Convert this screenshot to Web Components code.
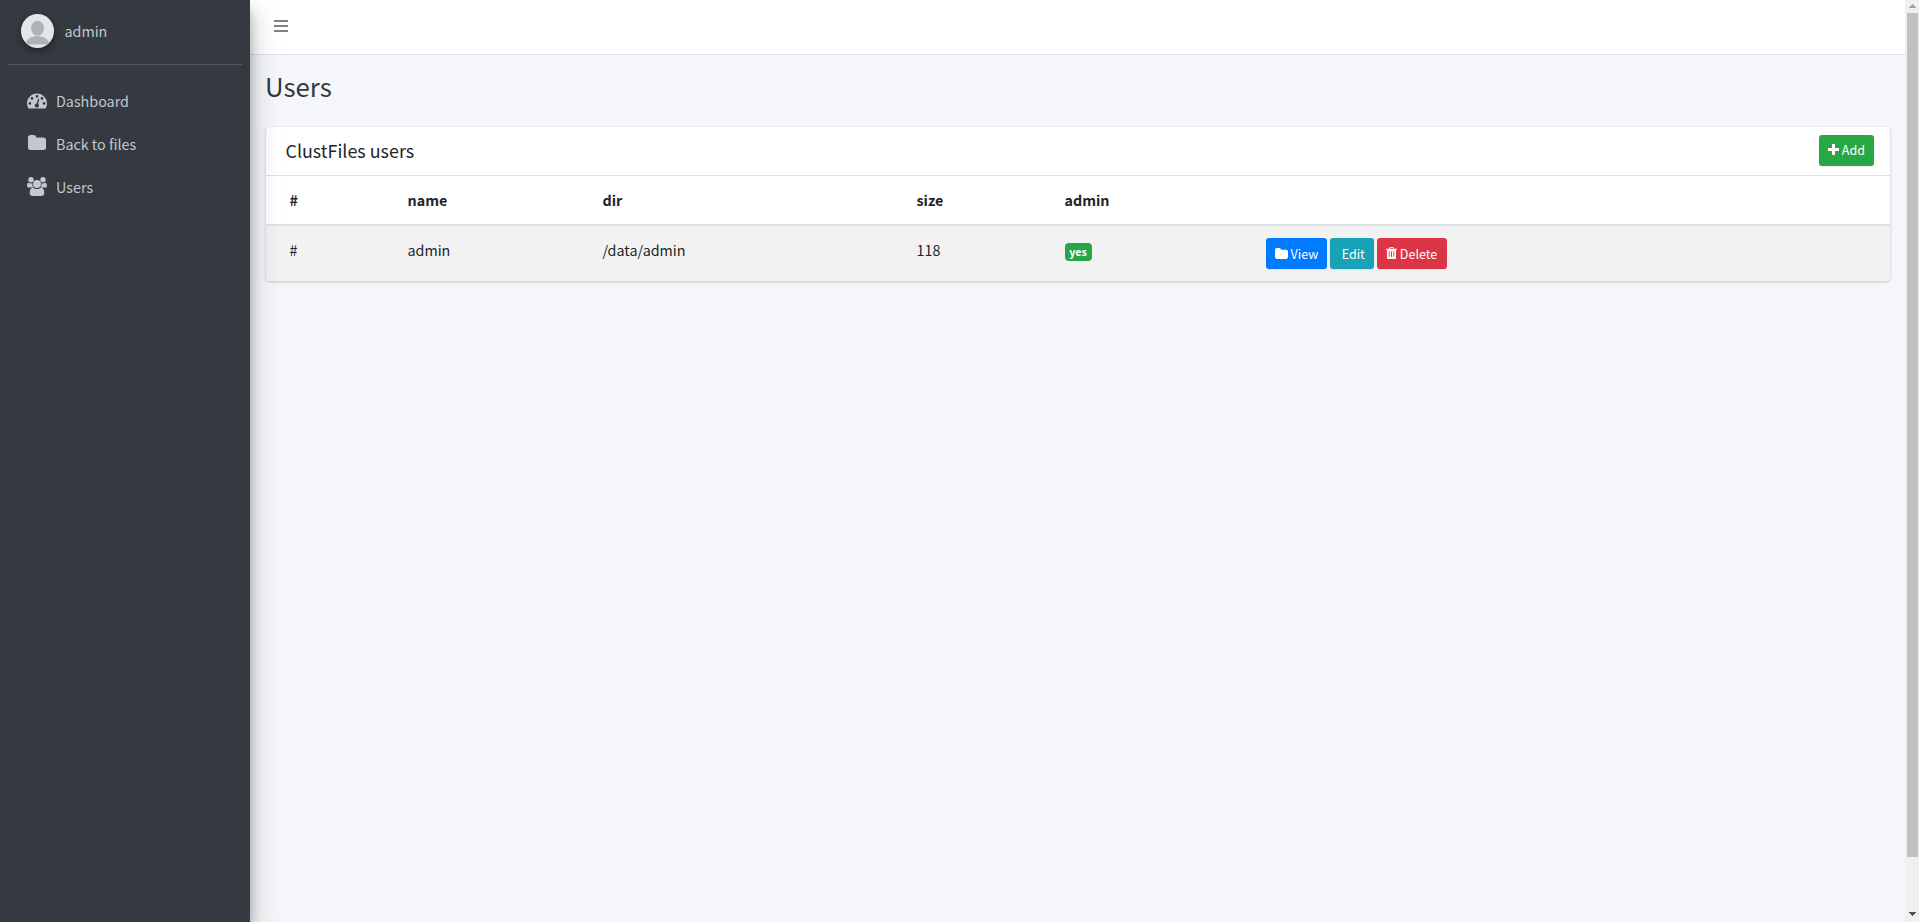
<!DOCTYPE html>
<html lang="en">
<head>
  <meta charset="utf-8">
  <title>Users</title>
  <style>
    html, body {
      height: 100%;
      margin: 0;
      overflow: hidden;
    }

    body {
      /* The Latin glyphs of this family are drawn large, --k brings them back to size */
      --k: .895;
      font-family: "Noto Sans CJK SC", "Noto Sans", sans-serif;
      font-size: calc(16px * var(--k));
      line-height: 24px;
      color: #212529;
      background: #f4f6f9;
    }
  </style>
</head>
<body>
  <admin-app>
    <side-bar slot="sidebar" user="admin">
      <nav-item icon="dashboard">Dashboard</nav-item>
      <nav-item icon="folder">Back to files</nav-item>
      <nav-item icon="users">Users</nav-item>
    </side-bar>
    <top-bar></top-bar>
    <page-title>Users</page-title>
    <data-card>
      <span slot="title">ClustFiles users</span>
      <app-button slot="tools" variant="success" icon="plus">Add</app-button>
      <user-row head>
        <span>#</span><span>name</span><span>dir</span><span>size</span><span>admin</span><span></span>
      </user-row>
      <user-row>
        <span>#</span><span>admin</span><span>/data/admin</span><span>118</span>
        <span><tag-badge>yes</tag-badge></span>
        <button-group>
          <app-button variant="primary" icon="folder">View</app-button>
          <app-button variant="info" icon="none">Edit</app-button>
          <app-button variant="danger" icon="trash">Delete</app-button>
        </button-group>
      </user-row>
    </data-card>
    <scroll-track slot="scroll"></scroll-track>
  </admin-app>

  <script>
    const ICONS = {
      dashboard: {
        box: "0 0 20 16",
        body: `<path fill-rule="evenodd" d="M10 .5C4.500 .5 0 5 0 10.400c0 1.700.4 3.300 1.200 4.600.2.400.5.600.9.600h15.800c.4 0 .7-.2.900-.6.800-1.300 1.200-2.900 1.200-4.600C20 5 15.500.5 10 .5z
          M2.900 9a1.400 1.400 0 1 0 0 2.800a1.400 1.400 0 0 0 0-2.800z
          M5 4a1.400 1.400 0 1 0 0 2.800a1.400 1.400 0 0 0 0-2.800z
          M10 1.900a1.400 1.400 0 1 0 0 2.800a1.400 1.400 0 0 0 0-2.800z
          M15 4a1.400 1.400 0 1 0 0 2.800a1.400 1.400 0 0 0 0-2.800z
          M17.100 9a1.400 1.400 0 1 0 0 2.800a1.400 1.400 0 0 0 0-2.800z
          M11 5.800L9.700 10.400a2.100 2.100 0 1 0 1.400.4L12.300 6.200z"/>`
      },
      folder: {
        box: "0 0 18 15",
        body: `<path d="M2.500 0h3.300a2.400 2.400 0 0 1 2.400 2v.4h7.300A2.500 2.500 0 0 1 18 4.900v7.600a2.500 2.500 0 0 1-2.500 2.500h-13A2.500 2.500 0 0 1 0 12.500v-10A2.500 2.500 0 0 1 2.500 0z"/>`
      },
      users: {
        box: "0 0 20 19",
        body: `<circle cx="4" cy="2.800" r="2.700"/><circle cx="16" cy="2.800" r="2.700"/><circle cx="10" cy="7" r="4"/>
          <path d="M2 5.800c.8.500 2 .8 3.400.4-.2 1.700.1 3.100 1 4.300H2C.8 10.500 0 9.900 0 8.900 0 7.400.6 5.400 2 5.800z"/>
          <path d="M18 5.800c-.8.500-2 .8-3.400.4.200 1.700-.1 3.100-1 4.300H18c1.200 0 2-.6 2-1.600 0-1.500-.6-3.500-2-3.100z"/>
          <path d="M6 10.600c2.500 2 5.500 2 8 0 2.200.2 3.300 2.400 3.300 5.400 0 1.900-1.100 3-2.900 3H5.600c-1.800 0-2.900-1.100-2.900-3 0-3 1.100-5.200 3.300-5.400z"/>`
      },
      plus: {
        box: "0 0 11 11",
        body: `<path d="M4 0h3v4h4v3H7v4H4V7H0V4h4z"/>`
      },
      trash: {
        box: "0 0 11 12",
        body: `<path fill-rule="evenodd" d="M3.800 0h3.400l.8 1.700h3v1h-1V11a1 1 0 0 1-1 1H2a1 1 0 0 1-1-1V2.700H0v-1h3zM4.300.8l-.4.9h3.200l-.4-.9z
          M2.700 4.300v5.400h.9V4.300z M5 4.300v5.400h1V4.300z M7.400 4.300v5.400h.9V4.300z"/>`
      }
    };

    function icon(name, width, height) {
      const item = ICONS[name];
      if (!item) return "";
      return `<svg viewBox="${item.box}" width="${width}" height="${height}" fill="currentColor">${item.body}</svg>`;
    }

    // Each element only gives its styles and its markup
    class BaseElement extends HTMLElement {
      constructor() {
        super();
        this.attachShadow({ mode: "open" });
      }

      connectedCallback() {
        this.shadowRoot.innerHTML = `<style>${this.constructor.styles}</style>${this.render()}`;
      }

      render() {
        return `<slot></slot>`;
      }
    }

    class AdminApp extends BaseElement {
      static get styles() {
        return /* css */`
          :host { display: flex; height: 100vh; }
          main { flex: 1; min-width: 0; }
        `;
      }

      render() {
        return /* html */`
          <slot name="sidebar"></slot>
          <main><slot></slot></main>
          <slot name="scroll"></slot>
        `;
      }
    }

    class SideBar extends BaseElement {
      static get styles() {
        return /* css */`
          :host {
            display: block;
            box-sizing: border-box;
            flex: 0 0 250px;
            padding: 0 8px;
            z-index: 2;
            color: #c2c7d0;
            background: #343a40;
            box-shadow: 0 14px 28px rgba(0, 0, 0, .25), 0 10px 10px rgba(0, 0, 0, .22);
          }
          .user {
            display: flex;
            align-items: center;
            gap: 10.5px;
            height: 65px;
            padding-left: 13px;
            box-sizing: border-box;
            border-bottom: 1px solid #4f5962;
            margin-bottom: 16px;
          }
          .user svg {
            border-radius: 50%;
            margin-bottom: 2px;
            box-shadow: 0 3px 6px rgba(0, 0, 0, .16), 0 3px 6px rgba(0, 0, 0, .23);
          }
          .user span { margin-bottom: 2px; }
          nav { display: flex; flex-direction: column; gap: 3px; }
        `;
      }

      render() {
        return /* html */`
          <div class="user">
            <svg width="33" height="34" viewBox="0 0 33 34">
              <rect width="33" height="34" fill="#e4e6e7"/>
              <ellipse cx="16.500" cy="14.200" rx="6.500" ry="7.400" fill="#adb3b7"/>
              <path d="M4.500 30.500C5 25.500 10 22 16.500 22S28 25.500 28.500 30.500z" fill="#adb3b7"/>
            </svg>
            <span>${this.getAttribute("user")}</span>
          </div>
          <nav><slot></slot></nav>
        `;
      }
    }

    class NavItem extends BaseElement {
      static get styles() {
        return /* css */`
          :host { display: flex; align-items: center; height: 40px; padding-left: 16px; }
          i { display: flex; justify-content: center; width: 26px; margin-right: 6px; }
          :host([icon=folder]) i { margin-bottom: 3px; }
          :host([icon=users]) i { margin-bottom: 1px; }
        `;
      }

      render() {
        const sizes = { dashboard: [20, 16], folder: [18, 15], users: [20, 19] };
        const name = this.getAttribute("icon");
        return `<i>${icon(name, ...sizes[name])}</i><slot></slot>`;
      }
    }

    class TopBar extends BaseElement {
      static get styles() {
        return /* css */`
          :host {
            display: flex;
            box-sizing: border-box;
            height: 55px;
            padding: 20px 24px;
            background: #fff;
            border-bottom: 1px solid #dee2e6;
          }
        `;
      }

      render() {
        return /* html */`
          <svg width="14" height="12" fill="#7f7f7f">
            <path d="M0 0h14v2H0zM0 5h14v2H0zM0 10h14v2H0z"/>
          </svg>
        `;
      }
    }

    class PageTitle extends BaseElement {
      static get styles() {
        return /* css */`
          :host {
            display: block;
            padding: 13px 15px 24px;
            font-size: calc(28.8px * var(--k));
            line-height: 35px;
            color: #343a40;
          }
        `;
      }
    }

    class DataCard extends BaseElement {
      static get styles() {
        return /* css */`
          :host {
            display: block;
            margin: 0 15px 0 16px;
            overflow: hidden;
            background: #fff;
            border-radius: 4px;
            box-shadow: 0 0 1px rgba(0, 0, 0, .125), 0 1px 3px rgba(0, 0, 0, .2);
          }
          header {
            display: flex;
            justify-content: space-between;
            align-items: center;
            box-sizing: border-box;
            height: 49px;
            padding: 0 16px 2px 19.5px;
            border-bottom: 1px solid #dfdfdf;
          }
          slot[name=title] { display: block; font-size: calc(20px * var(--k)); }
        `;
      }

      render() {
        return /* html */`
          <header><slot name="title"></slot><slot name="tools"></slot></header>
          <slot></slot>
        `;
      }
    }

    class UserRow extends BaseElement {
      static get styles() {
        return /* css */`
          :host {
            display: grid;
            grid-template-columns: 118px 195px 314px 148px 201.500px 1fr;
            padding: 12px 12px 12px 23.500px;
            background: #f2f2f2;
          }
          :host([head]) {
            font-weight: 700;
            background: #fff;
            border-bottom: 2px solid #dee2e6;
          }
        `;
      }
    }

    class TagBadge extends BaseElement {
      static get styles() {
        return /* css */`
          :host {
            display: inline-block;
            padding: 3px 4.800px;
            margin-top: 5px;
            vertical-align: top;
            font-size: calc(12px * var(--k));
            font-weight: 700;
            line-height: 12px;
            color: #fff;
            background: #28a745;
            border-radius: 4px;
          }
        `;
      }
    }

    class ButtonGroup extends BaseElement {
      static get styles() {
        return `:host { display: flex; gap: 3px; }`;
      }
    }

    class AppButton extends BaseElement {
      static get styles() {
        return /* css */`
          :host {
            display: flex;
            align-items: center;
            gap: 3px;
            box-sizing: border-box;
            height: 31px;
            padding: 0 9px 1px;
            font-size: calc(14px * var(--k));
            line-height: 21px;
            color: #fff;
            border-radius: 3px;
            box-shadow: 0 1px 1px rgba(0, 0, 0, .075);
          }
          :host([variant=success]) { background: #28a745; }
          :host([variant=primary]) { background: #007bff; padding-left: 8.500px; padding-right: 8.500px; }
          :host([variant=info]) { background: #17a2b8; padding-left: 12px; }
          :host([variant=danger]) { background: #dc3545; padding-right: 9.500px; }
        `;
      }

      render() {
        const sizes = { plus: [11, 11], folder: [13, 11], trash: [11, 12] };
        const name = this.getAttribute("icon");
        return `${icon(name, ...(sizes[name] ?? []))}<slot></slot>`;
      }
    }

    class ScrollTrack extends BaseElement {
      static get styles() {
        return /* css */`
          :host {
            display: flex;
            flex-direction: column;
            align-items: center;
            flex: 0 0 14px;
            background: #f0f0f0;
          }
          .up { height: 4px; margin: 4px 0 5px; }
          .thumb { width: 11px; height: 844px; margin-left: 1px; background: #c1c1c1; }
          .down { height: 4px; margin-top: auto; margin-bottom: 6px; }
        `;
      }

      render() {
        return /* html */`
          <svg class="up" width="7" height="4" fill="#a3a3a3"><path d="M3 0h1v1h1v1h1v1h1v1H0V3h1V2h1V1h1z"/></svg>
          <div class="thumb"></div>
          <svg class="down" width="7" height="4" fill="#505050"><path d="M0 0h7v1H6v1H5v1H4v1H3V3H2V2H1V1H0z"/></svg>
        `;
      }
    }

    customElements.define("admin-app", AdminApp);
    customElements.define("side-bar", SideBar);
    customElements.define("nav-item", NavItem);
    customElements.define("top-bar", TopBar);
    customElements.define("page-title", PageTitle);
    customElements.define("data-card", DataCard);
    customElements.define("user-row", UserRow);
    customElements.define("tag-badge", TagBadge);
    customElements.define("button-group", ButtonGroup);
    customElements.define("app-button", AppButton);
    customElements.define("scroll-track", ScrollTrack);
  </script>
</body>
</html>
